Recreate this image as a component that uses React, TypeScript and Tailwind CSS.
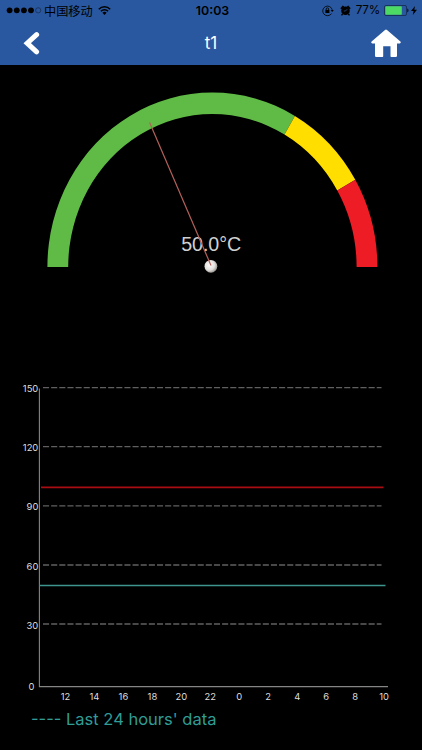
import React from 'react';

interface Tick {
  label: string;
  x: number;
  y: number;
}

const GRID_LINES = [27.6, 86.6, 145.9, 205, 264];

const Y_TICKS: Tick[] = [
  { label: '150', x: 38.3, y: 32.4 },
  { label: '120', x: 38.3, y: 91.4 },
  { label: '90', x: 38.3, y: 150.4 },
  { label: '60', x: 38.3, y: 210 },
  { label: '30', x: 38.3, y: 268.9 },
  { label: '0', x: 34.3, y: 330.3 },
];

const HOURS = ['12', '14', '16', '18', '20', '22', '0', '2', '4', '6', '8', '10'];

const CENTER = { x: 212.4, y: 202 };

const point = (deg: number, rx: number, ry: number) => {
  const rad = (deg * Math.PI) / 180;
  return `${(CENTER.x + rx * Math.cos(rad)).toFixed(2)} ${(CENTER.y - ry * Math.sin(rad)).toFixed(2)}`;
};

// One band of the gauge, going clockwise from one angle to another
const band = (from: number, to: number) =>
  `M${point(from, 165, 174.5)}A165 174.5 0 0 1 ${point(to, 165, 174.5)}L${point(to, 144.2, 153)}A144.2 153 0 0 0 ${point(from, 144.2, 153)}Z`;

const StatusBar: React.FC = () => (
  <div className="grid h-5 grid-cols-3 items-center text-black">
    <div className="flex h-5 items-center pl-[6px] pt-px">
      <svg className="h-[7px] w-[36px] shrink-0" viewBox="0 0 36 7">
        {[3.6, 10.8, 17.9, 25].map((cx) => (
          <circle key={cx} cx={cx} cy="3.3" r="2.9" fill="black" />
        ))}
        <circle cx="32.2" cy="3.3" r="2.6" fill="none" stroke="#10223e" strokeWidth="0.6" />
      </svg>
      <span className="ml-[2px] whitespace-nowrap font-['Noto_Sans_CJK_SC',sans-serif] text-[12.2px] leading-[20px]">中国移动</span>
      <svg className="ml-[5px] h-[9px] w-[13px] shrink-0" viewBox="0 0 13 9" fill="none" stroke="black" strokeWidth="1.5">
        <path d="M.8 3.2a8.1 8.1 0 0 1 11.4 0M2.9 5.3a5.1 5.1 0 0 1 7.2 0" />
        <path d="M4.4 6.8a3 3 0 0 1 4.2 0L6.5 9Z" fill="black" stroke="none" />
      </svg>
    </div>
    <div className="pl-[3px] pt-[2px] text-center font-['Inter',sans-serif] text-[12.4px] font-semibold leading-[18px]">10:03</div>
    <div className="flex h-5 items-center justify-end pr-[5px] pt-px">
      <svg className="h-3 w-3 shrink-0" viewBox="0 0 12 12" fill="none" stroke="black">
        <path d="M9.5 8.6A4.8 4.8 0 1 1 10.2 4.8" strokeWidth="0.8" />
        <path d="M8.6 5h3.2L10.2 7Z" fill="black" stroke="none" />
        <rect x="3.4" y="4.900" width="4" height="3.100" fill="black" stroke="none" />
        <path d="M4.200 5.200V4a1.200 1.200 0 0 1 2.400 0v1.200" strokeWidth="0.8" />
      </svg>
      <svg className="ml-[6px] h-[11px] w-[11px] shrink-0" viewBox="0 0 11 11">
        <circle cx="5.5" cy="5.8" r="4.3" />
        <path d="M.3 3.200 2.800.6 4.200 1.500 1.400 4.300ZM10.700 3.200 8.200.6 6.800 1.500 9.600 4.300ZM2 8.500 3.200 9.500 2 10.800 1 9.900ZM9 8.500 7.800 9.500 9 10.800 10 9.900Z" />
        <path d="M7.300 4.100 5.500 6H3.700" fill="none" stroke="#2958a0" strokeWidth="0.7" />
      </svg>
      <span className="ml-[5px] font-['Inter',sans-serif] text-[11.7px] leading-[19px] tracking-[-0.2px]">77%</span>
      <svg className="ml-[4px] h-[11px] w-[25px] shrink-0" viewBox="0 0 25 11">
        <rect x="0.5" y="0.5" width="22" height="10" rx="1.5" fill="none" stroke="#10223e" strokeWidth="0.7" />
        <rect x="1.3" y="1.3" width="16.5" height="8.4" rx="0.6" fill="#4cd964" />
        <path d="M23.4 3.6c1.4.3 1.4 3.5 0 3.8Z" />
      </svg>
      <svg className="ml-[2px] h-[9px] w-[6px] shrink-0" viewBox="0 0 6 9">
        <path d="M4 0 0 5h2.6L1.8 9 6 3.8H3.3Z" />
      </svg>
    </div>
  </div>
);

const NavBar: React.FC = () => (
  <div className="grid h-[45px] grid-cols-3 items-center">
    <svg className="ml-[23px] h-[24px] w-[18px]" viewBox="0 0 18 24" fill="none" stroke="white" strokeWidth="5" strokeLinecap="round">
      <path d="M13.600 3.700 4.200 12.200l9.400 8.600" />
    </svg>
    <h1 className="text-center font-['Inter',sans-serif] text-[17px] leading-6 text-white">t1</h1>
    <svg className="mr-[21px] mt-px h-[29px] w-[30px] justify-self-end" viewBox="0 0 30 29" fill="white">
      <path d="M14 .9q1-.8 2 0L29.400 12.500q1 1.600-.7 2H26v12.200q0 1.300-1.300 1.300h-4.500q-.7 0-.7-.7V17.200h-7.300v10.100q0 .7-.7.7H5.300Q4 28 4 26.700V14.500H1.300q-1.700-.4-.7-2Z" />
    </svg>
  </div>
);

const Gauge: React.FC = () => (
  <svg className="block h-[295px] w-[422px]" viewBox="0 0 422 295">
    <defs>
      <radialGradient id="hub" cx="0.4" cy="0.4" r="0.65">
        <stop offset="0" stopColor="#ffffff" />
        <stop offset="0.6" stopColor="#e2dfdc" />
        <stop offset="1" stopColor="#8d8986" />
      </radialGradient>
    </defs>
    <path d={band(180, 60)} fill="#60bb46" />
    <path d={band(60, 30)} fill="#ffde00" />
    <path d={band(30, 0)} fill="#ee1c25" />
    <text x="211.2" y="186.3" textAnchor="middle" textLength="60" className="fill-[#d0d0d0] font-['Liberation_Sans',sans-serif] text-[19.7px]">50.0°C</text>
    <circle cx="210.9" cy="201.3" r="6.4" fill="url(#hub)" />
    <path d="M149.600 57.500 211 200.500" stroke="#b5605a" strokeWidth="1.2" />
  </svg>
);

const HistoryChart: React.FC = () => (
  <svg className="block h-[345px] w-[422px]" viewBox="0 0 422 345">
    {GRID_LINES.map((y) => (
      <line key={y} x1="43" x2="381.5" y1={y} y2={y} stroke="#606060" strokeWidth="1.3" strokeDasharray="6.1 2.04" />
    ))}
    <path d="M39.400 28.500V326.600H388" fill="none" stroke="#858585" strokeWidth="1.1" />
    <line x1="41" x2="383.5" y1="127.3" y2="127.3" stroke="#a90c12" strokeWidth="1.7" />
    <line x1="39" x2="385.5" y1="225.500" y2="225.500" stroke="#3d9590" strokeWidth="1.3" />
    <g className="fill-[#dedede] font-['Inter',sans-serif] text-[9.4px]">
      {Y_TICKS.map((tick) => (
        <text key={tick.label} x={tick.x} y={tick.y} textAnchor="end">{tick.label}</text>
      ))}
      {HOURS.map((hour, i) => (
        <text key={hour} x={65.500 + i * 28.960} y="340.2" textAnchor="middle">{hour}</text>
      ))}
    </g>
  </svg>
);

const App: React.FC = () => {
  return (
    <div className="h-[750px] w-[422px] overflow-hidden bg-black">
      <header className="bg-[#2958a0]">
        <StatusBar />
        <NavBar />
      </header>
      <main>
        <Gauge />
        <HistoryChart />
        <p className="whitespace-pre pl-[31px] pt-[2px] font-['Inter',sans-serif] text-[16.5px] leading-6 text-[#2f9c96]">---- Last 24 hours' data</p>
      </main>
    </div>
  );
};

export default App;
